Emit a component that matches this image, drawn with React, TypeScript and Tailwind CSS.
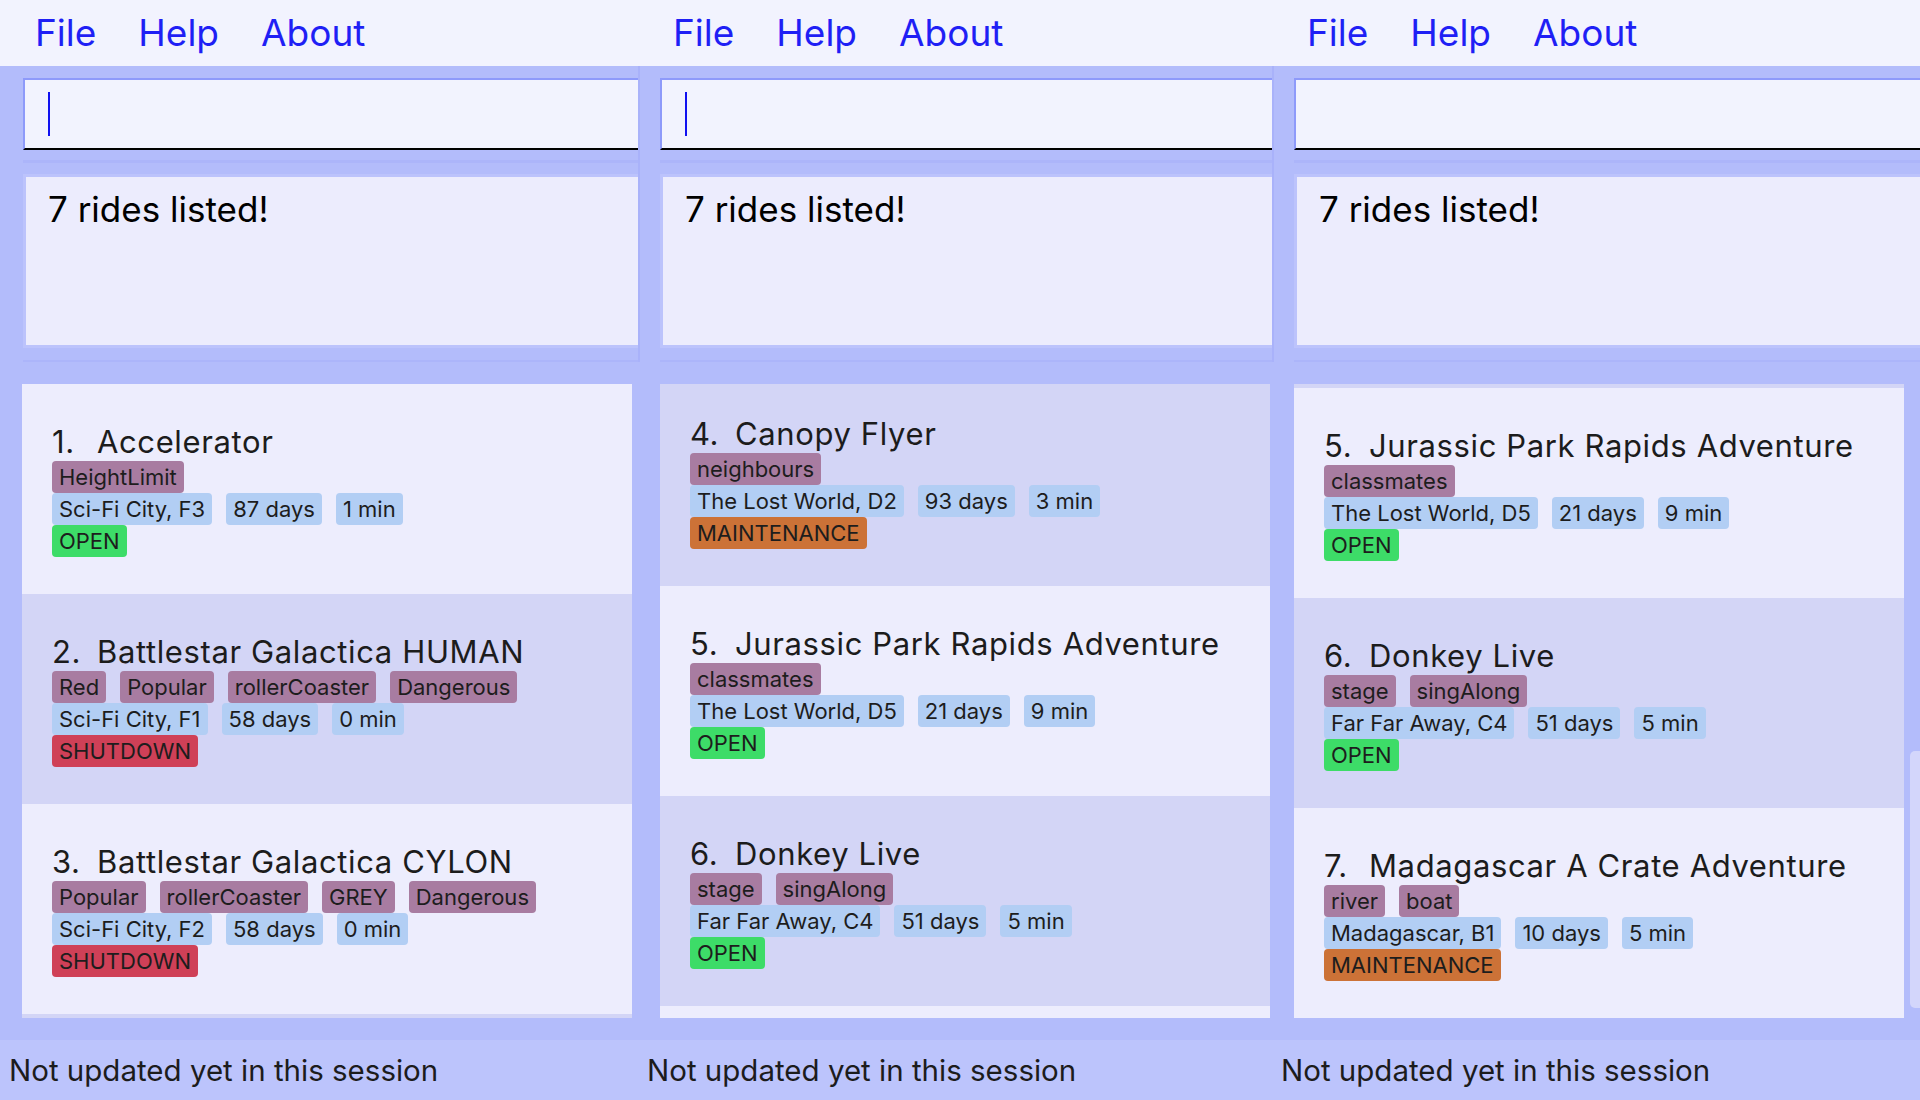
type Status = 'OPEN' | 'SHUTDOWN' | 'MAINTENANCE';

type Ride = {
  id: number;
  name: string;
  tags: string[];
  location: string;
  days: string;
  wait: string;
  status: Status;
};

const rides: Ride[] = [
  { id: 1, name: 'Accelerator', tags: ['HeightLimit'], location: 'Sci-Fi City, F3', days: '87 days', wait: '1 min', status: 'OPEN' },
  { id: 2, name: 'Battlestar Galactica HUMAN', tags: ['Red', 'Popular', 'rollerCoaster', 'Dangerous'], location: 'Sci-Fi City, F1', days: '58 days', wait: '0 min', status: 'SHUTDOWN' },
  { id: 3, name: 'Battlestar Galactica CYLON', tags: ['Popular', 'rollerCoaster', 'GREY', 'Dangerous'], location: 'Sci-Fi City, F2', days: '58 days', wait: '0 min', status: 'SHUTDOWN' },
  { id: 4, name: 'Canopy Flyer', tags: ['neighbours'], location: 'The Lost World, D2', days: '93 days', wait: '3 min', status: 'MAINTENANCE' },
  { id: 5, name: 'Jurassic Park Rapids Adventure', tags: ['classmates'], location: 'The Lost World, D5', days: '21 days', wait: '9 min', status: 'OPEN' },
  { id: 6, name: 'Donkey Live', tags: ['stage', 'singAlong'], location: 'Far Far Away, C4', days: '51 days', wait: '5 min', status: 'OPEN' },
  { id: 7, name: 'Madagascar A Crate Adventure', tags: ['river', 'boat'], location: 'Madagascar, B1', days: '10 days', wait: '5 min', status: 'MAINTENANCE' },
];

const statusTone: Record<Status, string> = {
  OPEN: 'bg-[#3ddc68]',
  SHUTDOWN: 'bg-[#cf4057]',
  MAINTENANCE: 'bg-[#cc7237]',
};

function Tag({ label, tone }: { label: string; tone: string }) {
  return (
    <span className={`inline-block h-8 whitespace-nowrap rounded-[4px] px-[7px] text-[22px] leading-8 text-[#1d1d1d] ${tone}`}>
      {label}
    </span>
  );
}

function RideCard({ ride }: { ride: Ride }) {
  const bg = ride.id % 2 === 1 ? 'bg-[#ededfd]' : 'bg-[#d3d5f6]';
  return (
    <div className={`h-[210px] shrink-0 pl-[30px] pt-[38px] ${bg}`}>
      <div className="flex h-[39px] items-center whitespace-nowrap text-[31px] leading-[39px] tracking-[0.02em] text-[#1c1c1c]">
        <span className="w-[45px]">{ride.id}.</span>
        <span>{ride.name}</span>
      </div>
      <div className="flex gap-[14px]">
        {ride.tags.map((t) => (
          <Tag key={t} label={t} tone="bg-[#a87ca1]" />
        ))}
      </div>
      <div className="flex gap-[14px]">
        <Tag label={ride.location} tone="bg-[#b2cef4]" />
        <Tag label={ride.days} tone="bg-[#b2cef4]" />
        <Tag label={ride.wait} tone="bg-[#b2cef4]" />
      </div>
      <div className="flex">
        <Tag label={ride.status} tone={statusTone[ride.status]} />
      </div>
    </div>
  );
}

type PaneProps = {
  first: boolean;
  width: string;
  listRight: string;
  shown: Ride[];
  offset: string;
  topPeek?: string;
  bottomPeek?: string;
  caret: boolean;
  scrollbar: boolean;
};

function Pane({ first, width, listRight, shown, offset, topPeek, bottomPeek, caret, scrollbar }: PaneProps) {
  return (
    <div className={`relative flex h-full flex-col overflow-hidden ${width}`}>
      <div className="flex h-[66px] shrink-0 items-center gap-[42px] bg-[#f2f3fe] pl-[35px] text-[37px] text-[#1f1ff5]">
        <span>File</span>
        <span>Help</span>
        <span>About</span>
      </div>

      <div className={first ? 'shrink-0 bg-[#b3bcfb] pl-[23px]' : 'shrink-0 border-l-2 border-[#a9b2fa] bg-[#b3bcfb] pl-[20px]'}>
        <div className="h-[97px] border-b-[3px] border-[#acb5fa] pt-[12px]">
          <div className="flex h-[72px] items-start border-l-2 border-t-2 border-b-2 border-l-[#8e9afa] border-t-[#8e9afa] border-b-black bg-[#f2f3fe]">
            {caret && <div className="ml-[23px] mt-[12px] h-[44px] w-[2px] bg-[#1010f0]" />}
          </div>
        </div>
        <div className="h-[199px] border-b-2 border-[#acb5fa] pt-[11px]">
          <div className="h-[174px] whitespace-nowrap border-[3px] border-r-0 border-[#bcc3fc] bg-[#ececfd] pl-[22px] pt-[12px] text-[35px] leading-[40px] text-black">
            7 rides listed!
          </div>
        </div>
      </div>

      <div className={`min-h-0 flex-1 bg-[#b3bcfb] pl-[22px] pt-[22px] ${listRight}`}>
        <div className="h-[634px] overflow-hidden bg-[#ededfd]">
          <div className={`flex flex-col ${offset}`}>
            {topPeek && <div className={`h-[4px] shrink-0 ${topPeek}`} />}
            {shown.map((r) => (
              <RideCard key={r.id} ride={r} />
            ))}
            {bottomPeek && <div className={`shrink-0 ${bottomPeek}`} />}
          </div>
        </div>
      </div>

      <div className="flex h-[60px] shrink-0 items-center whitespace-nowrap bg-[#bcc4fc] pl-[9px] text-[29.5px] leading-[40px] text-[#1c1c1c]">
        Not updated yet in this session
      </div>

      {scrollbar && <div className="absolute right-0 top-[751px] h-[257px] w-[10px] rounded-l-[5px] bg-[#d3d6fb]" />}
    </div>
  );
}

export default function App() {
  return (
    <div className="flex h-[1100px] w-[1920px] overflow-hidden bg-[#b3bcfb] font-['Inter','Roboto',sans-serif]">
      <Pane
        first
        width="w-[638px]"
        listRight="pr-[6px]"
        shown={rides.slice(0, 3)}
        offset="mt-0"
        bottomPeek="h-[4px] bg-[#d3d5f6]"
        caret
        scrollbar={false}
      />
      <Pane
        first={false}
        width="w-[634px]"
        listRight="pr-[2px]"
        shown={rides.slice(3, 6)}
        offset="-mt-2"
        bottomPeek="h-[12px] bg-[#ededfd]"
        caret
        scrollbar={false}
      />
      <Pane
        first={false}
        width="flex-1"
        listRight="pr-[16px]"
        shown={rides.slice(4)}
        offset="mt-0"
        topPeek="bg-[#d3d5f6]"
        caret={false}
        scrollbar
      />
    </div>
  );
}
